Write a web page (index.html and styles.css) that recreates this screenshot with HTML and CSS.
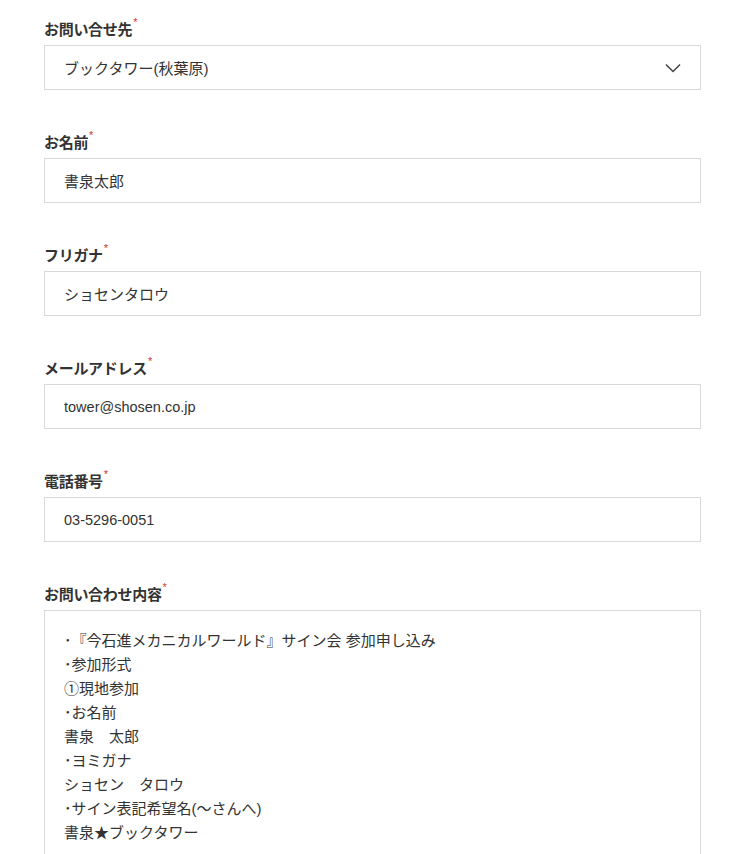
FILE: index.html
```html
<!DOCTYPE html>
<html lang="ja">
<head>
<meta charset="utf-8">
<link rel="stylesheet" href="styles.css">
</head>
<body>
<form class="form">
  <div class="field">
    <label class="label">お問い合せ先<span class="req">*</span></label>
    <div class="box select">
      <span>ブックタワー(秋葉原)</span>
      <svg class="chev" width="16" height="10" viewBox="0 0 16 10"><path d="M1 1.5 L8 8.5 L15 1.5" fill="none" stroke="#444" stroke-width="1.5"/></svg>
    </div>
  </div>
  <div class="field">
    <label class="label">お名前<span class="req">*</span></label>
    <div class="box">書泉太郎</div>
  </div>
  <div class="field">
    <label class="label">フリガナ<span class="req">*</span></label>
    <div class="box">ショセンタロウ</div>
  </div>
  <div class="field">
    <label class="label">メールアドレス<span class="req">*</span></label>
    <div class="box latin">tower@shosen.co.jp</div>
  </div>
  <div class="field">
    <label class="label">電話番号<span class="req">*</span></label>
    <div class="box latin">03-5296-0051</div>
  </div>
  <div class="field">
    <label class="label">お問い合わせ内容<span class="req">*</span></label>
    <div class="box area">
      <div>･『今石進メカニカルワールド』サイン会 参加申し込み</div>
      <div>･参加形式</div>
      <div>①現地参加</div>
      <div>･お名前</div>
      <div>書泉　太郎</div>
      <div>･ヨミガナ</div>
      <div>ショセン　タロウ</div>
      <div>･サイン表記希望名(～さんへ)</div>
      <div>書泉★ブックタワー</div>
      <div>&nbsp;</div>
      <div>&nbsp;</div>
    </div>
  </div>
</form>
</body>
</html>
```

FILE: styles.css
```css
html, body {
  margin: 0;
  padding: 0;
  background: #fff;
}
body {
  font-family: "Liberation Sans", "Noto Sans CJK JP", sans-serif;
  color: #333;
  overflow: hidden;
  height: 854px;
}
.form {
  padding: 11px 0 0 44px;
  width: 657px;
}
.field {
  margin-bottom: 34px;
}
.label {
  display: block;
  font-size: 15px;
  font-weight: bold;
  line-height: 22px;
  height: 22px;
  margin-bottom: 12px;
  color: #333;
  letter-spacing: -0.3px;
}
.req {
  color: #d0342c;
  font-size: 11px;
  font-weight: normal;
  vertical-align: 9px;
  margin-left: 1px;
}
.box {
  box-sizing: border-box;
  height: 45px;
  border: 1px solid #d9d9d9;
  padding: 0 19px;
  display: flex;
  align-items: center;
  font-size: 15px;
  color: #333;
}
.latin {
  font-size: 14.5px;
}
.select {
  justify-content: space-between;
  padding-right: 19px;
}
.chev {
  display: block;
}
.area {
  height: auto;
  display: block;
  padding-top: 18px;
  line-height: 24px;
}
```
